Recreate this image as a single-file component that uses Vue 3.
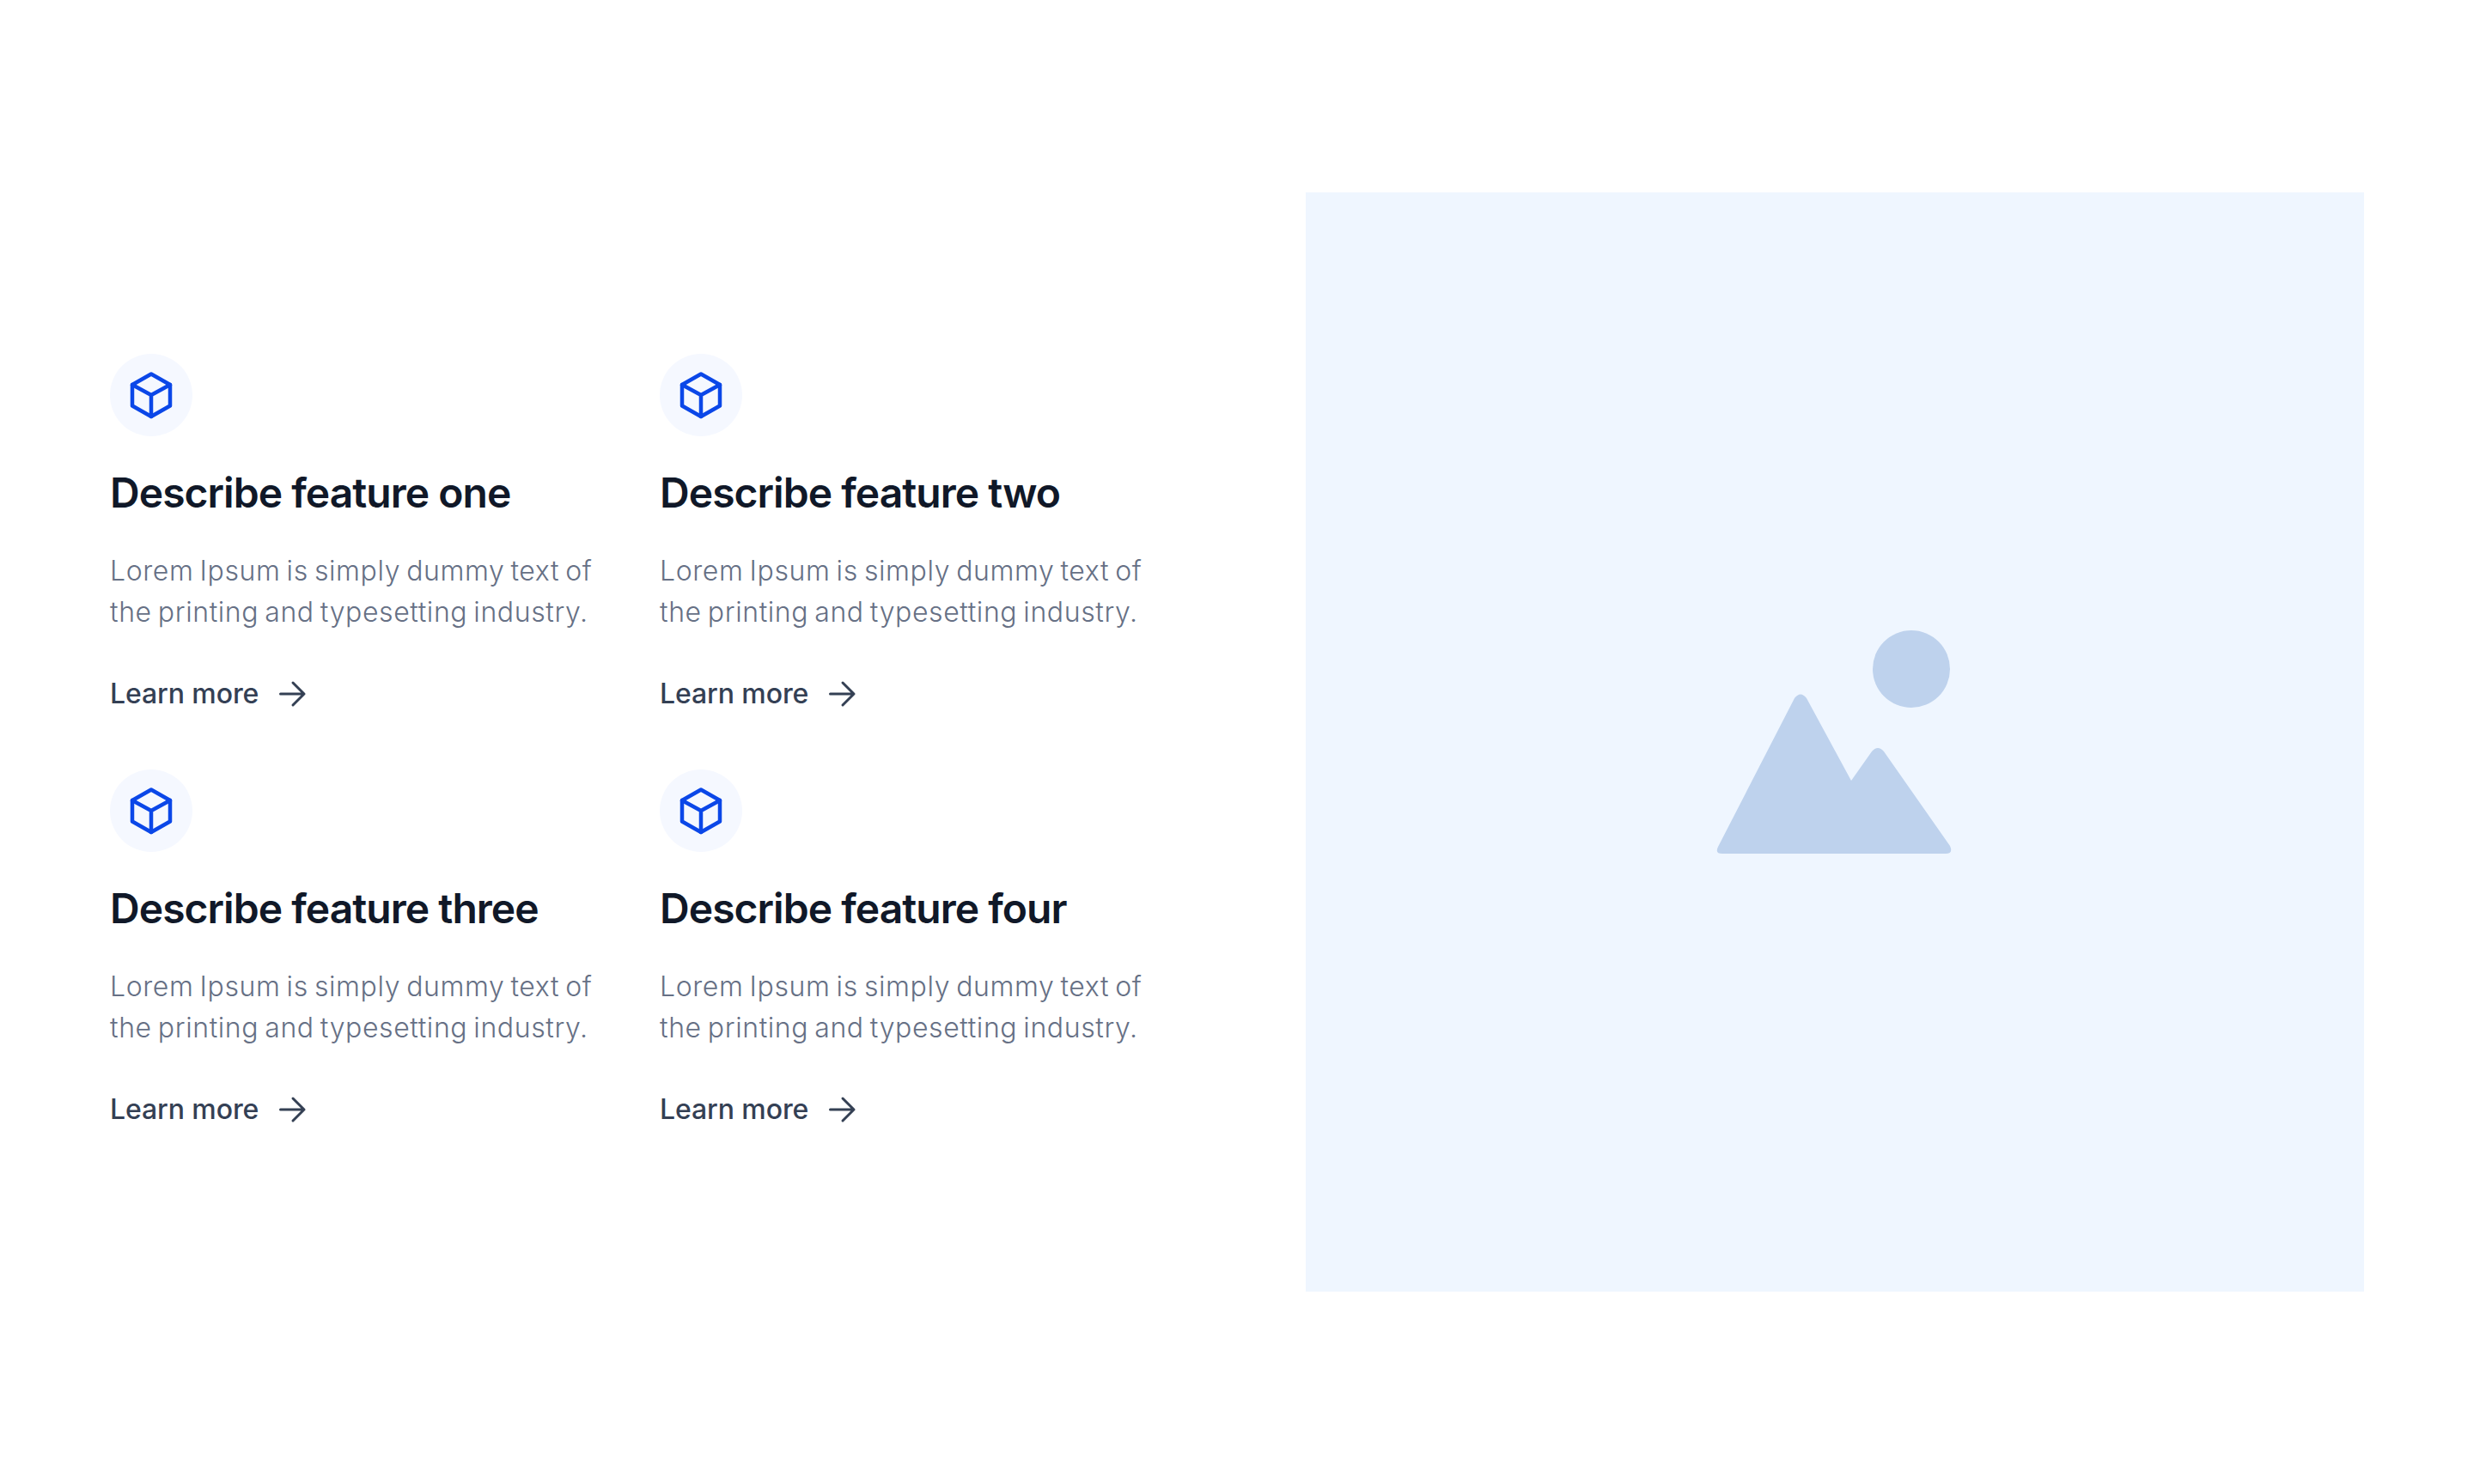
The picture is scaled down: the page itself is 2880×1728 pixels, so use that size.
<template>
  <div class="page">
    <div class="features">
      <div v-for="title in features" :key="title" class="feature">
        <div class="icon-wrap">
          <svg class="cube" viewBox="0 0 64 64" fill="none" stroke="#0b47e8" stroke-width="4.5" stroke-linejoin="round" stroke-linecap="round">
            <path d="M32 7.500 54 20V44.500L32 57 10 44.500V20Z" />
            <path d="M10 20 32 32 54 20M32 32V57" />
          </svg>
        </div>
        <h3>{{ title }}</h3>
        <p>Lorem Ipsum is simply dummy text of the printing and typesetting industry.</p>
        <a class="more">
          Learn more
          <svg class="arrow" viewBox="0 0 32 32" fill="none" stroke="#344054" stroke-width="3" stroke-linecap="round" stroke-linejoin="round">
            <path d="M1.500 16H29M16 3 29 16 16 29" />
          </svg>
        </a>
      </div>
    </div>
    <div class="panel">
      <svg class="placeholder" viewBox="0 0 276 260" fill="#bed2ed">
        <circle cx="227" cy="45" r="45" />
        <path d="M7 260Q-2 260 2 252L91 79Q98 70 105 79L157 175L181 141Q188 133 195 141L272 251Q276 260 267 260Z" />
      </svg>
    </div>
  </div>
</template>

<script setup>
const features = [
  'Describe feature one',
  'Describe feature two',
  'Describe feature three',
  'Describe feature four'
]
</script>

<style>
html,
body {
  background: #ffffff;
}
</style>

<style scoped>
.page {
  box-sizing: border-box;
  width: 2880px;
  height: 1728px;
  padding: 224px 128px;
  display: flex;
  gap: 160px;
  font-family: Inter, "Liberation Sans", sans-serif;
}

.features {
  width: 1232px;
  display: grid;
  grid-template-columns: 592px 592px;
  column-gap: 48px;
  row-gap: 64px;
  align-content: center;
}

.icon-wrap {
  width: 96px;
  height: 96px;
  border-radius: 50%;
  background: #f5f8ff;
  display: flex;
  align-items: center;
  justify-content: center;
}

.cube {
  width: 64px;
  height: 64px;
}

h3 {
  margin: 30px 0 0;
  font-size: 48px;
  line-height: 72px;
  font-weight: 600;
  letter-spacing: -0.96px;
  color: #101828;
}

p {
  margin: 31px 0 0;
  font-size: 32px;
  line-height: 48px;
  font-weight: 350;
  letter-spacing: 0.6px;
  word-spacing: -2.5px;
  color: #667085;
}

.more {
  margin-top: 47px;
  display: flex;
  align-items: center;
  gap: 24px;
  font-size: 32px;
  line-height: 48px;
  font-weight: 450;
  letter-spacing: -0.1px;
  color: #344054;
}

.arrow {
  width: 32px;
  height: 32px;
}

.panel {
  flex: none;
  width: 1232px;
  height: 1280px;
  background: #eff6ff;
  display: flex;
  align-items: center;
  justify-content: center;
}

.placeholder {
  width: 276px;
  height: 260px;
}
</style>
